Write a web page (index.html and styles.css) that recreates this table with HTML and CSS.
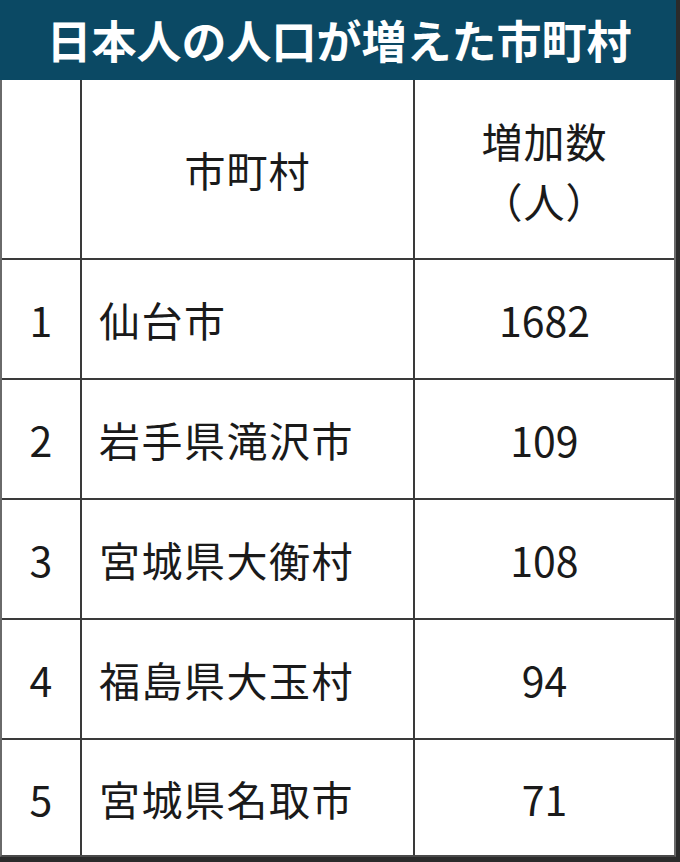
FILE: index.html
```html
<!DOCTYPE html>
<html lang="ja">
<head>
<meta charset="utf-8">
<link rel="stylesheet" href="styles.css">
</head>
<body>
<div class="board">
  <div class="title">日本人の人口が増えた市町村</div>
  <div class="grid">
    <div class="cell head"></div>
    <div class="cell head center">市町村</div>
    <div class="cell head center stack"><span>増加数</span><span>（人）</span></div>

    <div class="cell center">1</div>
    <div class="cell name">仙台市</div>
    <div class="cell center">1682</div>

    <div class="cell center">2</div>
    <div class="cell name">岩手県滝沢市</div>
    <div class="cell center">109</div>

    <div class="cell center">3</div>
    <div class="cell name">宮城県大衡村</div>
    <div class="cell center">108</div>

    <div class="cell center">4</div>
    <div class="cell name">福島県大玉村</div>
    <div class="cell center">94</div>

    <div class="cell center">5</div>
    <div class="cell name">宮城県名取市</div>
    <div class="cell center">71</div>
  </div>
</div>
</body>
</html>
```
FILE: styles.css
```css
html, body {
  margin: 0;
  padding: 0;
}
body {
  background: #2b2b2b;
  width: 680px;
  height: 862px;
  overflow: hidden;
  font-family: "Noto Sans CJK JP", "Noto Sans", sans-serif;
}
.board {
  width: 676px;
  display: flex;
  flex-direction: column;
}
.title {
  height: 80px;
  background: #0b4964;
  color: #ffffff;
  font-weight: 700;
  font-size: 45px;
  line-height: 80px;
  text-align: center;
  padding-left: 2px;
}
.grid {
  display: grid;
  grid-template-columns: 78px 331px 259px;
  grid-template-rows: 178px 118px 118px 118px 118px 115px;
  gap: 2px;
  background: #3a3a3a;
  border-left: 2px solid #6a6a6a;
  border-right: 2px solid #6a6a6a;
  border-bottom: 2px solid #4a4a4a;
}
.cell {
  background: #ffffff;
  color: #1a1a1a;
  font-size: 41px;
  display: flex;
  align-items: center;
}
.center {
  justify-content: center;
}
.name {
  padding-left: 17px;
  letter-spacing: 1.5px;
}
.head {
  letter-spacing: 1px;
}
.stack {
  flex-direction: column;
  line-height: 60px;
  padding-top: 2px;
}
```
